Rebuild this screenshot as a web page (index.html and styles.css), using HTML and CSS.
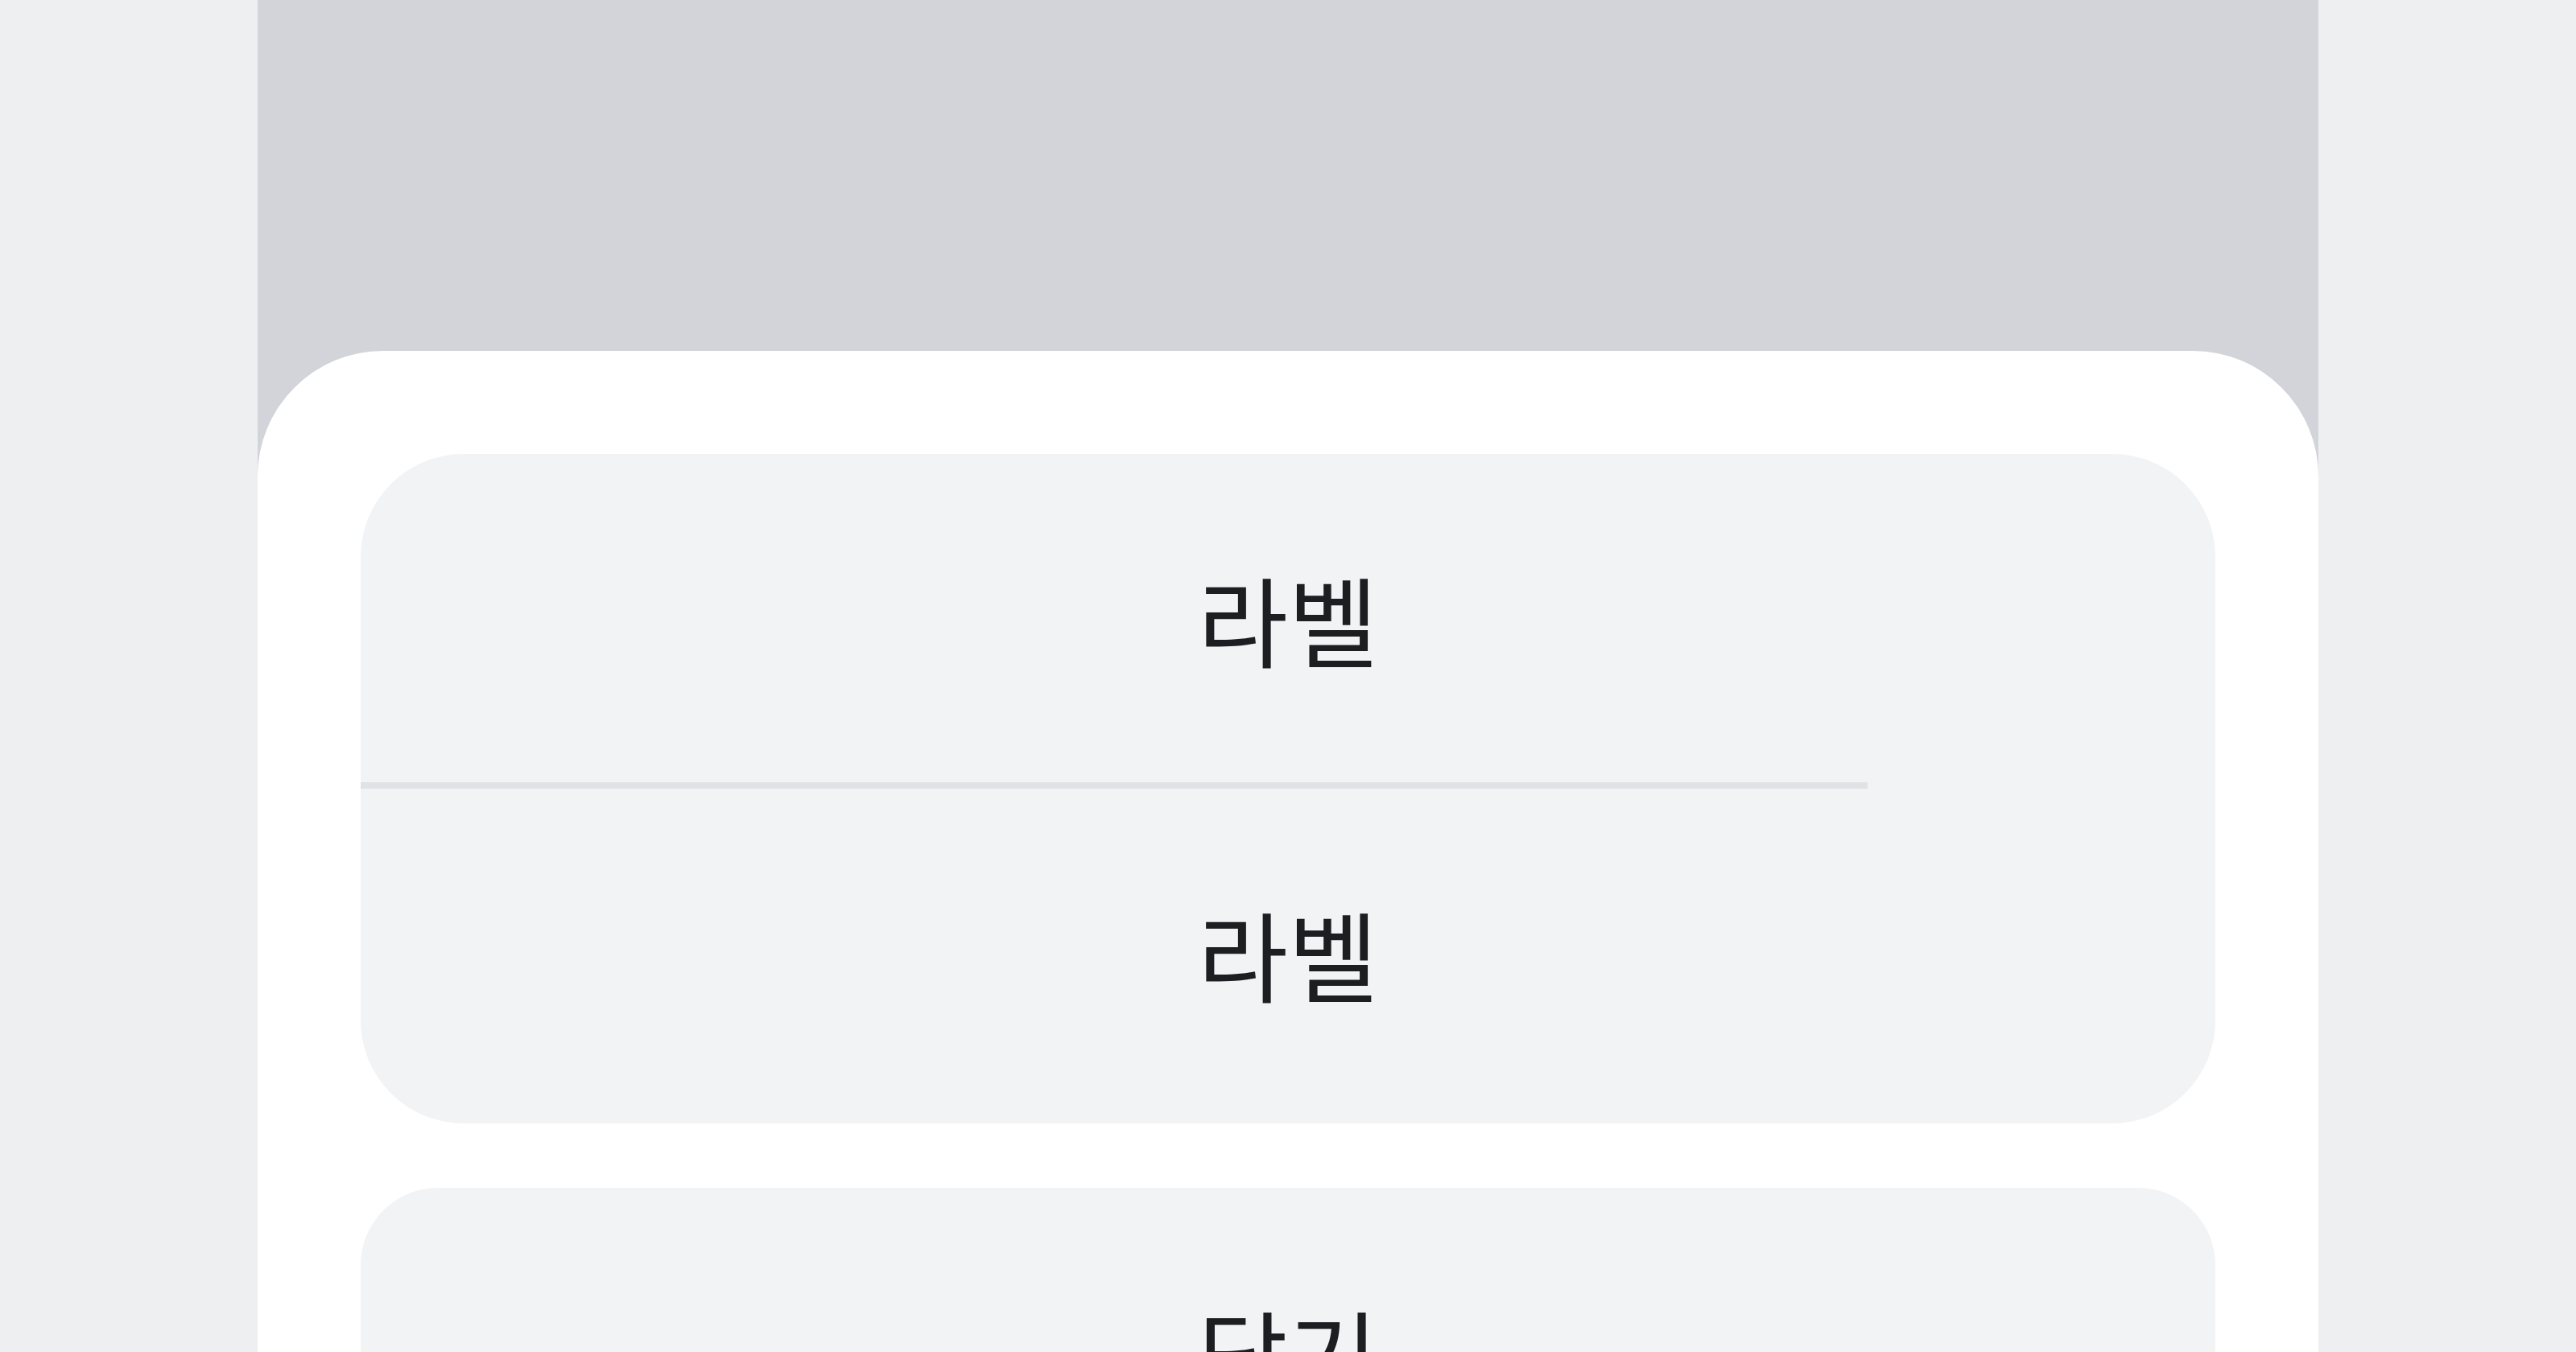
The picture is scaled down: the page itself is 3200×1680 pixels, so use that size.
FILE: index.html
```html
<!DOCTYPE html>
<html lang="ko">
<head>
<meta charset="utf-8">
<title>액션 시트</title>
<link rel="stylesheet" href="styles.css">
</head>
<body>
  <div class="device">
    <div class="backdrop"></div>
    <div class="sheet">
      <div class="group group-actions">
        <button class="item item-divided" type="button">라벨</button>
        <button class="item" type="button">라벨</button>
      </div>
      <div class="group group-close">
        <button class="item" type="button">닫기</button>
      </div>
    </div>
  </div>
</body>
</html>
```

FILE: styles.css
```css
html, body {
  margin: 0;
  padding: 0;
}

body {
  background: #eeeff1;
  height: 1680px;
  overflow: hidden;
  font-family: "Noto Sans CJK KR", "Noto Sans", sans-serif;
}

.device {
  width: 2560px;
  height: 1680px;
  margin: 0 auto;
  background: #d3d4d9;
  display: flex;
  flex-direction: column;
  overflow: hidden;
}

.backdrop {
  height: 436px;
  flex: none;
}

.sheet {
  flex: 1;
  background: #ffffff;
  border-radius: 156px 156px 0 0;
  padding: 128px;
  display: flex;
  flex-direction: column;
  gap: 80px;
}

.group {
  background: #f2f3f5;
  border-radius: 128px;
  display: flex;
  flex-direction: column;
  overflow: hidden;
  flex: none;
}

.group-close {
  border-radius: 96px;
}

.item {
  position: relative;
  height: 416px;
  border: 0;
  margin: 0;
  padding: 0 0 10px;
  background: transparent;
  display: flex;
  align-items: center;
  justify-content: center;
  font-family: inherit;
  font-size: 122px;
  font-weight: 400;
  line-height: 1;
  color: #1d1e22;
}

/* hairline separating rows inside a group */
.item-divided::after {
  content: "";
  position: absolute;
  left: 0;
  right: 432px;
  bottom: 0;
  height: 8px;
  background: #e1e2e5;
}
```
